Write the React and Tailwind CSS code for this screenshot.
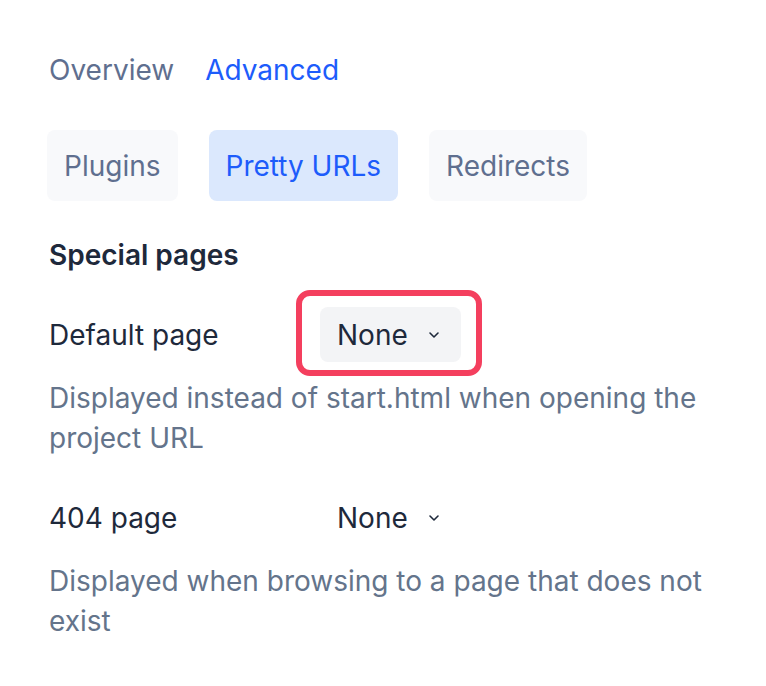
import React from "react";

const Chevron = () => (
  <svg width="12" height="8" viewBox="0 0 12 8" fill="none" className="ml-[20px]">
    <path d="M2 2l4 4 4-4" stroke="#1e293b" strokeWidth="1.6" strokeLinecap="round" strokeLinejoin="round" />
  </svg>
);

const Select = ({ active }) => (
  <div className="relative">
    {active && (
      <span className="absolute -left-[24px] -right-[21px] -top-[17px] -bottom-[14px] rounded-[14px] border-[6px] border-[#f43f5e] bg-white" />
    )}
    <div
      className={
        "relative flex items-center h-[55px] pl-[17px] pr-[21px] rounded-[8px] text-[#1e293b] " +
        (active ? "bg-[#f3f4f6]" : "")
      }
    >
      <span>None</span>
      <Chevron />
    </div>
  </div>
);

const Field = ({ label, active, help }) => (
  <div className="flex flex-col">
    <div className="flex items-center h-[55px]">
      <div className="w-[271px] text-[#1e293b]">{label}</div>
      <Select active={active} />
    </div>
    <p className="mt-[16px] leading-[40px] text-[#64748b]">{help}</p>
  </div>
);

export default function App() {
  const pills = ["Plugins", "Pretty URLs", "Redirects"];
  return (
    <div
      className="min-h-screen bg-white pl-[49px] pr-[40px] pt-[50px] text-[28px]"
      style={{ fontFamily: "Inter, 'Noto Sans', sans-serif" }}
    >
      <div className="flex gap-[31px] leading-[40px]">
        <span className="text-[#5f6f8f]">Overview</span>
        <span className="text-[#1d5cfb]">Advanced</span>
      </div>
      <div className="flex gap-[31px] mt-[40px] -ml-[2px]">
        {pills.map((p) => (
          <div
            key={p}
            className={
              "h-[71px] px-[17px] flex items-center rounded-[8px] " +
              (p === "Pretty URLs" ? "bg-[#dbe8fd] text-[#1d5cfb]" : "bg-[#f8f9fb] text-[#5f6f8f]")
            }
          >
            {p}
          </div>
        ))}
      </div>
      <h2 className="mt-[34px] font-semibold text-[#1e293b] leading-[40px]">Special pages</h2>
      <div className="mt-[32px]">
        <Field
          label="Default page"
          active
          help="Displayed instead of start.html when opening the project URL"
        />
      </div>
      <div className="mt-[32px]">
        <Field label="404 page" help="Displayed when browsing to a page that does not exist" />
      </div>
    </div>
  );
}
